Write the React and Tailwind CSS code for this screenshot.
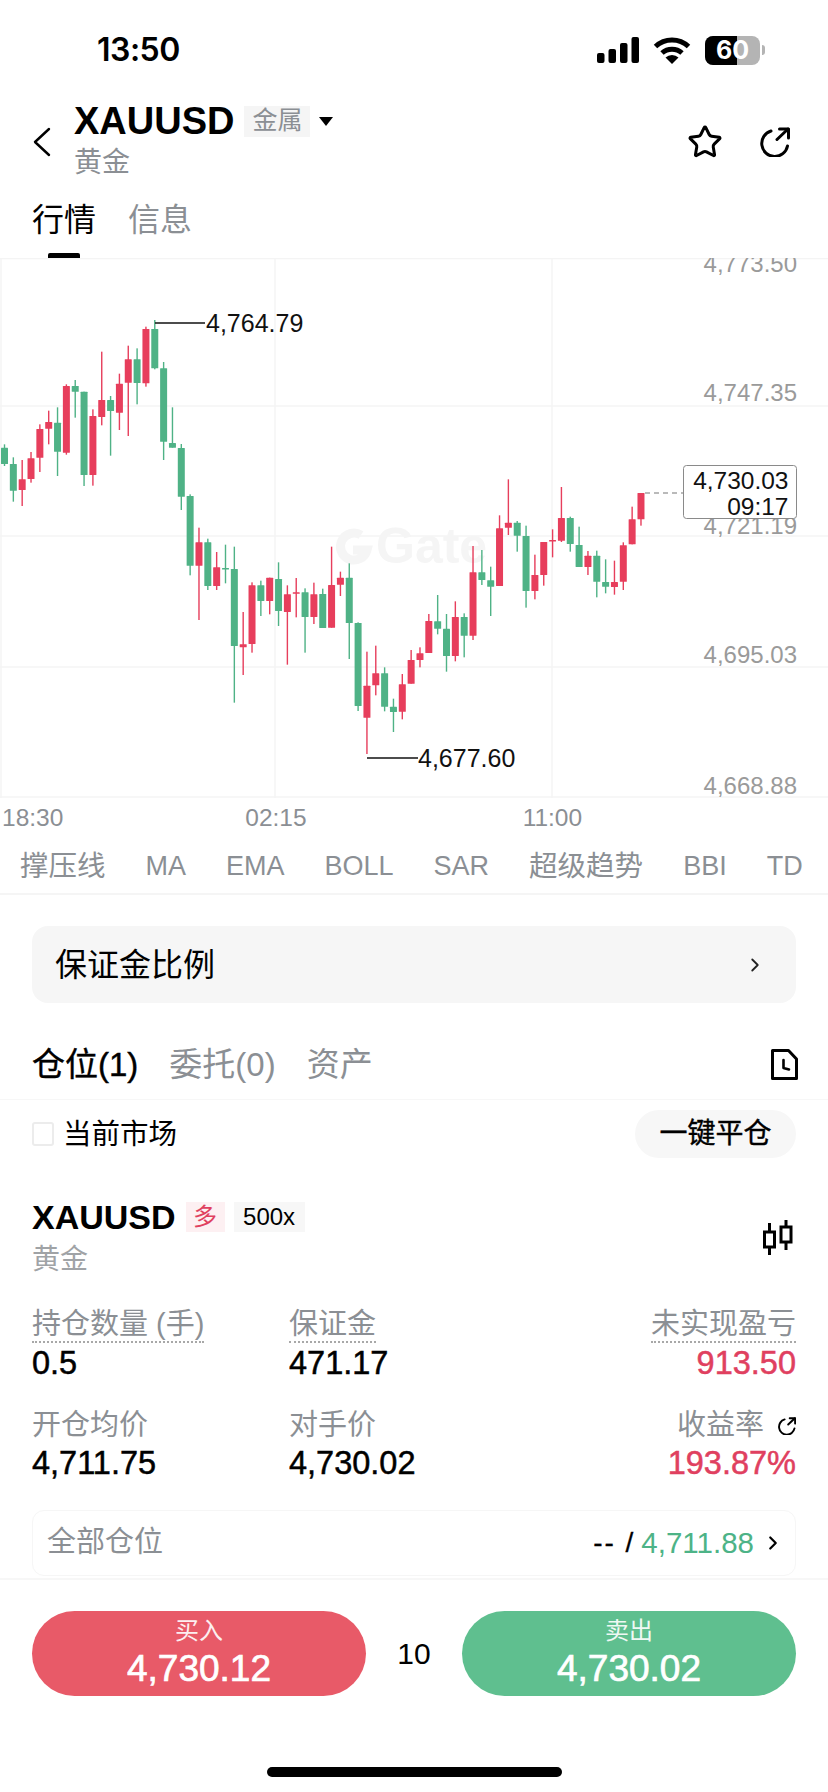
import React from 'react';
import { Star, ChevronRight } from 'lucide-react';

const GREEN = '#4fb286';
const RED = '#e73e5c';
const STEP = 8.84;
const START = 4.5;

// [color, wick top, body top, body bottom, wick bottom], measured on the chart with y * 3
const SEG_A = [
  ['g', 553, 563, 612, 618], ['g', 592, 612, 692, 725], ['r', 600, 658, 690, 738], ['r', 576, 595, 657, 668],
  ['r', 493, 507, 593, 636], ['r', 452, 486, 506, 553], ['g', 442, 488, 575, 648], ['r', 373, 378, 578, 584],
  ['g', 360, 378, 395, 473], ['g', 395, 395, 645, 678], ['r', 448, 468, 645, 677], ['r', 275, 420, 471, 496],
  ['g', 408, 420, 453, 587], ['r', 341, 371, 458, 510], ['r', 257, 298, 368, 528], ['g', 265, 298, 369, 433],
  ['r', 200, 207, 370, 380], ['g', 180, 207, 325, 328], ['g', 306, 325, 545, 600], ['g', 442, 549, 563, 563],
  ['g', 552, 564, 710, 750],
];
const SEG_B = [
  ['g', -137, -132, 77, 106], ['r', -37, 7, 77, 240], ['g', -4, 7, 138, 150], ['r', 36, 82, 138, 150],
  ['g', 14, 84, 88, 130], ['g', 20, 87, 318, 488], ['r', 216, 313, 322, 405], ['r', 127, 136, 312, 338],
  ['g', 122, 136, 183, 228], ['r', 113, 113, 183, 223], ['g', 67, 117, 213, 258], ['r', 136, 163, 216, 374],
  ['r', 114, 157, 161, 232], ['g', 145, 157, 231, 338], ['r', 128, 163, 231, 252], ['g', 146, 162, 264, 264],
  ['r', 20, 135, 263, 263], ['r', 95, 113, 134, 168], ['g', 70, 113, 249, 357], ['g', 247, 249, 498, 513],
  ['r', 335, 437, 533, 642], ['r', 317, 400, 436, 466], ['g', 382, 400, 500, 514], ['g', 476, 500, 516, 576],
];
const SEG_C = [
  ['r', 702, 733, 815, 838], ['r', 630, 660, 731, 731], ['r', 622, 640, 660, 682], ['r', 522, 543, 639, 639],
  ['g', 465, 544, 566, 583], ['g', 522, 566, 648, 695], ['r', 484, 531, 648, 664], ['g', 520, 531, 587, 652],
  ['r', 318, 397, 587, 600], ['g', 330, 397, 420, 435], ['g', 380, 421, 440, 528], ['r', 226, 265, 438, 438],
  ['r', 118, 248, 263, 285], ['g', 243, 248, 287, 335], ['g', 257, 288, 453, 503], ['r', 344, 405, 453, 478],
  ['r', 306, 306, 405, 437], ['r', 268, 300, 303, 352], ['r', 141, 234, 302, 306], ['g', 230, 234, 312, 335],
  ['g', 260, 315, 381, 381], ['r', 333, 347, 381, 405], ['g', 332, 347, 425, 472], ['g', 358, 426, 440, 460],
  ['r', 362, 426, 441, 464], ['r', 307, 316, 425, 450], ['r', 200, 238, 313, 313], ['r', 159, 159, 238, 257],
];

const candles = [
  ...SEG_A.map((c) => ({ c, base: 260 })),
  ...SEG_B.map((c) => ({ c, base: 540 })),
  ...SEG_C.map((c) => ({ c, base: 440 })),
];

function Chart() {
  // svg top sits at y=258 of the page
  const toY = (base, v) => base + v / 3 - 258;
  return (
    <svg width="828" height="540" viewBox="0 0 828 540" className="block">
      <g stroke="#f4f4f4" strokeWidth="1.5">
        <line x1="0" y1="0.5" x2="828" y2="0.5" />
        <line x1="0" y1="148" x2="828" y2="148" />
        <line x1="0" y1="278" x2="828" y2="278" />
        <line x1="0" y1="409" x2="828" y2="409" />
        <line x1="0" y1="539" x2="828" y2="539" />
        <line x1="1" y1="0" x2="1" y2="540" />
        <line x1="275" y1="0" x2="275" y2="540" />
        <line x1="552" y1="0" x2="552" y2="540" />
      </g>

      {/* watermark */}
      <g fill="none" stroke="#f5f5f5" strokeWidth="9">
        <path d="M361 277 A13.5 13.5 0 1 0 367 292 L353 292" />
      </g>
      <text x="376" y="305" fontSize="50" fontWeight="700" fill="#f5f5f5">Gate</text>

      {/* axis labels */}
      <g fontSize="24" fill="#9a9a9a" textAnchor="end">
        <text x="797" y="14">4,773.50</text>
        <text x="797" y="143">4,747.35</text>
        <text x="797" y="276">4,721.19</text>
        <text x="797" y="405">4,695.03</text>
        <text x="797" y="536">4,668.88</text>
      </g>

      {candles.map(({ c, base }, i) => {
        const [color, wt, bt, bb, wb] = c;
        const fill = color === 'g' ? GREEN : RED;
        const x = START + STEP * i;
        const top = toY(base, bt);
        const h = Math.max(toY(base, bb) - top, 1.5);
        return (
          <g key={i} fill={fill}>
            <rect x={x - 0.7} y={toY(base, wt)} width="1.4" height={toY(base, wb) - toY(base, wt)} />
            <rect x={x - 3.5} y={top} width="7" height={h} rx="0.5" />
          </g>
        );
      })}

      {/* high and low */}
      <line x1="155" y1="65" x2="205" y2="65" stroke="#111" strokeWidth="1.5" />
      <text x="206" y="74" fontSize="25" fill="#111">4,764.79</text>
      <line x1="367" y1="500" x2="418" y2="500" stroke="#111" strokeWidth="1.5" />
      <text x="418" y="509" fontSize="25" fill="#111">4,677.60</text>

      {/* current price */}
      <line x1="645" y1="235" x2="683" y2="235" stroke="#777" strokeWidth="1.2" strokeDasharray="5 4" />
      <rect x="683.5" y="207.5" width="113" height="53" rx="3" fill="#fff" stroke="#8a8a8a" />
      <g fontSize="24.5" fill="#111" textAnchor="end">
        <text x="788.5" y="231">4,730.03</text>
        <text x="788.5" y="257">09:17</text>
      </g>
    </svg>
  );
}

function SignalIcon() {
  return (
    <svg width="42" height="26" viewBox="0 0 42 26" fill="#000">
      <rect x="0" y="16" width="7.5" height="10" rx="2" />
      <rect x="11.5" y="12" width="7.5" height="14" rx="2" />
      <rect x="23" y="6" width="7.5" height="20" rx="2" />
      <rect x="34.5" y="0" width="7.5" height="26" rx="2" />
    </svg>
  );
}

function WifiIcon() {
  return (
    <svg width="38" height="28" viewBox="0 0 38 28" fill="none" stroke="#000" strokeWidth="5">
      <path d="M2.5 10.5 A24 24 0 0 1 35.5 10.5" />
      <path d="M9 17 A15 15 0 0 1 29 17" />
      <path d="M19 28 L12.5 21.5 A9.5 9.5 0 0 1 25.5 21.5 Z" fill="#000" stroke="none" />
    </svg>
  );
}

function Battery() {
  return (
    <div className="flex items-center gap-[2px]">
      <div className="relative w-[55px] h-[29px] rounded-[8px] bg-[#b4b4b4] overflow-hidden">
        <div className="absolute left-0 top-0 bottom-0 w-[32px] bg-black" />
        <div className="relative flex h-full items-center justify-center font-['Inter'] text-[25px] font-bold text-white leading-none">60</div>
      </div>
      <div className="w-[3px] h-[10px] rounded-r-full bg-[#b4b4b4]" />
    </div>
  );
}

function BackIcon() {
  return (
    <svg width="18" height="30" viewBox="0 0 18 30" fill="none" stroke="#000" strokeWidth="2.4" strokeLinecap="round" strokeLinejoin="round">
      <path d="M16 2 L2 15 L16 28" />
    </svg>
  );
}

function ShareIcon({ size = 30, sw = 3 }) {
  return (
    <svg width={size} height={size} viewBox="0 0 30 30" fill="none" stroke="#000" strokeWidth={sw} strokeLinecap="round" strokeLinejoin="round">
      <path d="M11 4 A13 13 0 1 0 27.5 19" />
      <path d="M17 12.5 L28 2" />
      <path d="M19.5 2 H28.5 V11" />
    </svg>
  );
}

function CandleIcon() {
  return (
    <svg width="30" height="36" viewBox="0 0 30 36" fill="none" stroke="#000" strokeWidth="3">
      <rect x="1.5" y="12" width="10" height="15" />
      <path d="M6.5 3 V12 M6.5 27 V35" />
      <rect x="18" y="7" width="10" height="15" />
      <path d="M23 0 V7 M23 22 V30" />
    </svg>
  );
}

function RecordIcon() {
  return (
    <svg width="27" height="31" viewBox="0 0 27 31" fill="none" stroke="#000" strokeWidth="3" strokeLinejoin="round" strokeLinecap="round">
      <path d="M1.5 1.5 H17.5 L25.5 10 V29.5 H1.5 Z" />
      <path d="M12.5 11 V19 L18 20.5" strokeWidth="2.6" />
    </svg>
  );
}

function Stat({ label, value, dotted, right, valueClass = 'text-black', icon }) {
  return (
    <div className={right ? 'flex flex-col items-end' : 'flex flex-col items-start'}>
      <div className="flex items-center gap-[14px] h-[33px]">
        <span className={`text-[29px] leading-[33px] text-[#8b8f94] ${dotted ? 'border-b-2 border-dotted border-[#a8a8a8]' : ''}`}>{label}</span>
        {icon}
      </div>
      <div className={`mt-[2px] text-[32.5px] leading-[38px] [-webkit-text-stroke:0.5px] ${valueClass}`}>{value}</div>
    </div>
  );
}

export default function App() {
  const indicators = [
    { name: '撑压线', cjk: true },
    { name: 'MA' },
    { name: 'EMA' },
    { name: 'BOLL' },
    { name: 'SAR' },
    { name: '超级趋势', cjk: true },
    { name: 'BBI' },
    { name: 'TD' },
  ];

  return (
    <div className="w-[828px] h-[1792px] overflow-hidden bg-white text-black font-['Liberation_Sans','Noto_Sans_CJK_SC',sans-serif]">
      {/* status bar */}
      <div className="flex items-center justify-between h-[100px] pl-[97px] pr-[63px]">
        <span className="font-['Inter'] text-[32px] font-semibold tracking-[-0.5px]">13:50</span>
        <div className="flex items-center gap-[14px]">
          <SignalIcon />
          <WifiIcon />
          <Battery />
        </div>
      </div>

      {/* header */}
      <div className="flex items-center h-[84px] pl-[33px] pr-[38px]">
        <BackIcon />
        <div className="ml-[23px] flex flex-col">
          <div className="flex items-center h-[40px]">
            <span className="text-[38px] font-bold leading-none">XAUUSD</span>
            <span className="ml-[10px] px-[8px] h-[31px] flex items-center bg-[#f5f5f5] text-[25px] text-[#8b8f94]">金属</span>
            <span className="ml-[9px] w-0 h-0 border-x-[7px] border-x-transparent border-t-[9px] border-t-black" />
          </div>
          <span className="mt-[2px] text-[28px] leading-[40px] text-[#8b8f94]">黄金</span>
        </div>
        <div className="ml-auto flex items-center gap-[37px]">
          <Star size={36} strokeWidth={2} />
          <ShareIcon />
        </div>
      </div>

      {/* page tabs */}
      <div className="h-[74px] px-[32px] pt-[15px]">
        <div className="flex gap-[32px] text-[32px] leading-[42px]">
          <span>行情</span>
          <span className="text-[#8b8f94]">信息</span>
        </div>
        <div className="ml-[16px] mt-[12px] w-[32px] h-[5px] rounded-t-[2px] bg-black" />
      </div>

      <Chart />

      {/* time axis */}
      <div className="flex h-[40px] items-center text-[24.5px] text-[#8b8f94]">
        <span className="ml-[2px]">18:30</span>
        <span className="ml-[182px]">02:15</span>
        <span className="ml-[216px]">11:00</span>
      </div>

      {/* indicators */}
      <div className="flex items-center gap-[40px] h-[57px] pl-[20px] pt-[2px] border-b-2 border-[#f5f5f5] text-[#8b8f94] whitespace-nowrap">
        {indicators.map((item) => (
          <span key={item.name} className={item.cjk ? 'text-[28.5px]' : 'text-[27px]'}>{item.name}</span>
        ))}
      </div>

      {/* margin ratio */}
      <div className="mx-[32px] mt-[31px] h-[77px] flex items-center justify-between pl-[23px] pr-[30px] rounded-[16px] bg-[#f6f6f6]">
        <span className="text-[32px]">保证金比例</span>
        <ChevronRight size={22} strokeWidth={2} className="text-[#222]" />
      </div>

      {/* positions tabs */}
      <div className="flex items-center h-[97px] pt-[27px] pl-[32px] pr-[30px] border-b border-[#f7f7f7] text-[33px]">
        <span className="[-webkit-text-stroke:0.4px]">仓位(1)</span>
        <span className="ml-[31px] text-[#8b8f94]">委托(0)</span>
        <span className="ml-[31px] text-[#8b8f94]">资产</span>
        <span className="ml-auto"><RecordIcon /></span>
      </div>

      {/* filter */}
      <div className="flex items-center justify-between h-[78px] px-[32px] pt-[10px] pb-[20px]">
        <div className="flex items-center">
          <span className="w-[22px] h-[24px] rounded-[3px] border-2 border-[#ececec]" />
          <span className="ml-[9px] text-[28.5px]">当前市场</span>
        </div>
        <span className="flex items-center justify-center w-[161px] h-[48px] rounded-full bg-[#f7f7f7] text-[28px] [-webkit-text-stroke:0.4px]">一键平仓</span>
      </div>

      {/* position */}
      <div className="flex items-start pl-[32px] pr-[35px] h-[131px] pt-[19px]">
        <div className="flex flex-col">
          <div className="flex items-center">
            <span className="text-[34px] font-bold leading-[40px]">XAUUSD</span>
            <span className="ml-[10px] w-[39px] h-[30px] flex items-center justify-center bg-[#fdf0f2] text-[24px] text-[#e0405f]">多</span>
            <span className="ml-[9px] w-[71px] h-[30px] flex items-center justify-center bg-[#f7f7f7] text-[24px]">500x</span>
          </div>
          <span className="mt-[3px] text-[28px] leading-[40px] text-[#a0a3a6]">黄金</span>
        </div>
        <span className="ml-auto mt-[23px]"><CandleIcon /></span>
      </div>

      <div className="grid grid-cols-[257px_1fr_auto] gap-y-[27px] px-[32px]">
        <Stat label="持仓数量 (手)" value="0.5" dotted />
        <Stat label="保证金" value="471.17" dotted />
        <Stat label="未实现盈亏" value="913.50" dotted right valueClass="text-[#e0405f]" />
        <Stat label="开仓均价" value="4,711.75" />
        <Stat label="对手价" value="4,730.02" />
        <Stat label="收益率" value="193.87%" right valueClass="text-[#e0405f]" icon={<ShareIcon size={18} sw={3.2} />} />
      </div>

      {/* all positions */}
      <div className="mx-[32px] mt-[28px] h-[66px] flex items-center pl-[14px] pr-[11px] rounded-[12px] border border-[#f6f6f6]">
        <span className="text-[29px] text-[#8b8f94]">全部仓位</span>
        <span className="ml-auto text-[28px] tracking-[2px] [-webkit-text-stroke:0.3px]">-- /</span>
        <span className="ml-[6px] text-[29.5px] text-[#4db387]">4,711.88</span>
        <ChevronRight size={22} strokeWidth={2.4} className="ml-[8px]" />
      </div>

      {/* buy and sell */}
      <div className="mt-[2px] flex items-center justify-between h-[150px] px-[32px] pb-[2px] border-t-2 border-[#f7f7f7]">
        <button className="w-[334px] h-[85px] flex flex-col items-center justify-center rounded-full bg-[#e85a68] text-white">
          <span className="text-[24px] leading-[30px] opacity-90">买入</span>
          <span className="mt-[2px] text-[37px] leading-[42px] [-webkit-text-stroke:0.7px]">4,730.12</span>
        </button>
        <span className="text-[30px]">10</span>
        <button className="w-[334px] h-[85px] flex flex-col items-center justify-center rounded-full bg-[#5fbf8f] text-white">
          <span className="text-[24px] leading-[30px] opacity-90">卖出</span>
          <span className="mt-[2px] text-[37px] leading-[42px] [-webkit-text-stroke:0.7px]">4,730.02</span>
        </button>
      </div>

      {/* home indicator */}
      <div className="mt-[39px] mx-auto w-[295px] h-[10px] rounded-full bg-black" />
    </div>
  );
}
